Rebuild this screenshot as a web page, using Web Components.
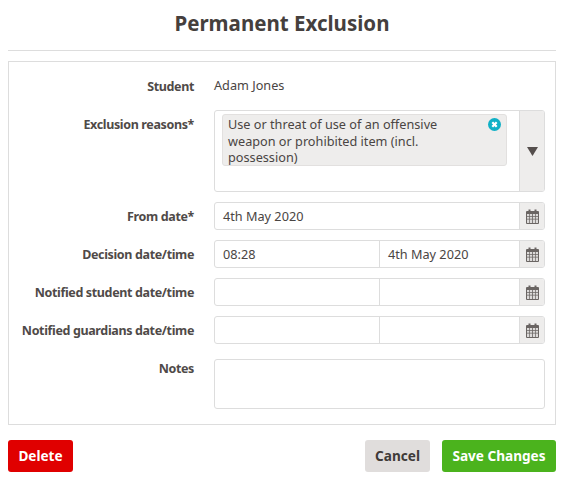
<!DOCTYPE html>
<html>
<head>
<meta charset="utf-8">
<style>
  html, body { margin: 0; background: #fff; }
  body { font-family: "Noto Sans", "Lato", sans-serif; color: #4a4543; }
</style>
</head>
<body>
<exclusion-dialog>
  <form-row label="Student" plain>Adam Jones</form-row>
  <form-row label="Exclusion reasons*"><reason-select>Use or threat of use of an offensive weapon or prohibited item (incl. possession)</reason-select></form-row>
  <form-row label="From date*"><date-field date="4th May 2020"></date-field></form-row>
  <form-row label="Decision date/time"><date-field time="08:28" date="4th May 2020" split></date-field></form-row>
  <form-row label="Notified student date/time"><date-field split></date-field></form-row>
  <form-row label="Notified guardians date/time"><date-field split></date-field></form-row>
  <form-row label="Notes" notes><notes-box></notes-box></form-row>
</exclusion-dialog>

<script>
// shared calendar glyph for the date fields
const calendarIcon = `
  <svg width="13" height="15" viewBox="0 0 13 15">
    <path fill="#6a6563" d="M2.500 .5h2v1.500h4V.5h2V2H12a1 1 0 0 1 1 1v11a1 1 0 0 1-1 1H1a1 1 0 0 1-1-1V3a1 1 0 0 1 1-1h1.500z"/>
    <path fill="#dcdad9" d="M1 5h2.200v2H1zM3.900 5h2.200v2H3.900zM6.900 5h2.200v2H6.900zM9.800 5H12v2H9.800zM1 7.800h2.200v2H1zM3.900 7.800h2.200v2H3.900zM6.900 7.800h2.200v2H6.900zM9.800 7.800H12v2H9.800zM1 10.600h2.200V14H1zM3.900 10.600h2.200V14H3.900zM6.900 10.600h2.200V14H6.900zM9.800 10.600H12V14H9.800z"/>
  </svg>`;

class ExclusionDialog extends HTMLElement {
  constructor() {
    super();
    this.attachShadow({ mode: "open" });
    this.shadowRoot.innerHTML = `
      <style>
        :host { display: block; padding: 0 8px; width: 548px; }
        h1 {
          margin: 0;
          height: 50px;
          line-height: 47px;
          text-align: center;
          font-size: 20.5px;
          font-weight: 700;
          color: #453f3d;
          border-bottom: 1px solid #ddd;
        }
        .panel {
          margin-top: 10px;
          border: 1px solid #ddd;
          padding: 10px 10px 15px 0;
          display: flex;
          flex-direction: column;
          gap: 10px;
        }
        .actions { display: flex; gap: 12px; margin-top: 15px; }
        .spacer { flex: 1; }
        button {
          height: 32px;
          border: 0;
          border-radius: 3px;
          font: 700 13.6px "Noto Sans", "Lato", sans-serif;
          color: #fff;
          padding: 0 0 2px;
        }
        .delete { width: 65px; background: #e00000; }
        .cancel { width: 65px; background: #e0dddc; color: #3f3a38; }
        .save { width: 114px; background: #4bb31d; }
      </style>
      <h1>Permanent Exclusion</h1>
      <div class="panel"><slot></slot></div>
      <div class="actions">
        <button class="delete">Delete</button>
        <span class="spacer"></span>
        <button class="cancel">Cancel</button>
        <button class="save">Save Changes</button>
      </div>
    `;
  }
}

class FormRow extends HTMLElement {
  constructor() {
    super();
    this.attachShadow({ mode: "open" });
    this.shadowRoot.innerHTML = `
      <style>
        :host { display: grid; grid-template-columns: 185px 331px; column-gap: 20px; font-size: 12.7px; }
        :host([plain]) { height: 28px; align-items: center; }
        :host([notes]) { margin-top: 5px; }
        label {
          display: block;
          height: 28px;
          text-align: right;
          font-weight: 700;
          font-size: 12.5px;
          letter-spacing: -0.36px;
          color: #4f4a48;
          line-height: 29px;
          white-space: nowrap;
        }
        :host([notes]) label { line-height: 20px; }
        .value { min-width: 0; color: #4a4543; }
        :host([plain]) .value { padding-bottom: 2px; }
      </style>
      <label>${this.getAttribute("label")}</label>
      <div class="value"><slot></slot></div>
    `;
  }
}

class ReasonSelect extends HTMLElement {
  constructor() {
    super();
    this.attachShadow({ mode: "open" });
    this.shadowRoot.innerHTML = `
      <style>
        :host {
          display: flex;
          height: 82px;
          box-sizing: border-box;
          border: 1px solid #ddd;
          border-radius: 3px;
          overflow: hidden;
        }
        .box { flex: 1; padding: 3px 12px 0 7px; }
        .tag {
          position: relative;
          height: 52px;
          box-sizing: border-box;
          padding: 1px 30px 0 5px;
          background: #eeedec;
          border: 1px solid #e2e0df;
          border-radius: 3px;
          line-height: 16.5px;
          font-size: 12.7px;
        }
        .tag svg { position: absolute; right: 5px; top: 3px; }
        .arrow {
          width: 25px;
          box-sizing: border-box;
          background: #eeedec;
          border-left: 1px solid #ddd;
          display: flex;
          align-items: center;
          justify-content: center;
        }
        .arrow svg { margin-left: 1px; }
      </style>
      <div class="box">
        <div class="tag"><slot></slot>
          <svg width="13" height="13" viewBox="0 0 13 13">
            <circle cx="6.500" cy="6.500" r="6.500" fill="#0fb0c6"/>
            <path d="M4.300 4.300l4.400 4.400M8.700 4.300l-4.400 4.400" stroke="#fff" stroke-width="2.200"/>
          </svg>
        </div>
      </div>
      <div class="arrow">
        <svg width="11" height="9" viewBox="0 0 11 9"><path fill="#554f4d" d="M0 0h11L5.500 9z"/></svg>
      </div>
    `;
  }
}

class DateField extends HTMLElement {
  constructor() {
    super();
    this.attachShadow({ mode: "open" });
    const time = this.getAttribute("time") || "";
    const date = this.getAttribute("date") || "";
    const timeCell = this.hasAttribute("split") ? `<div class="cell time">${time}</div>` : "";
    this.shadowRoot.innerHTML = `
      <style>
        :host {
          display: flex;
          height: 28px;
          box-sizing: border-box;
          border: 1px solid #ddd;
          border-radius: 3px;
          overflow: hidden;
          font-size: 12.7px;
          line-height: 26px;
        }
        .cell { flex: 1; box-sizing: border-box; padding: 0 8px; min-width: 0; }
        .time { flex: 0 0 165px; border-right: 1px solid #ddd; }
        .icon {
          width: 25px;
          box-sizing: border-box;
          background: #eeedec;
          border-left: 1px solid #ddd;
          display: flex;
          align-items: center;
          justify-content: center;
        }
      </style>
      ${timeCell}
      <div class="cell">${date}</div>
      <div class="icon">${calendarIcon}</div>
    `;
  }
}

class NotesBox extends HTMLElement {
  constructor() {
    super();
    this.attachShadow({ mode: "open" });
    this.shadowRoot.innerHTML = `
      <style>
        :host { display: block; height: 50px; box-sizing: border-box; border: 1px solid #ddd; border-radius: 3px; }
      </style>
    `;
  }
}

customElements.define("exclusion-dialog", ExclusionDialog);
customElements.define("form-row", FormRow);
customElements.define("reason-select", ReasonSelect);
customElements.define("date-field", DateField);
customElements.define("notes-box", NotesBox);
</script>
</body>
</html>
